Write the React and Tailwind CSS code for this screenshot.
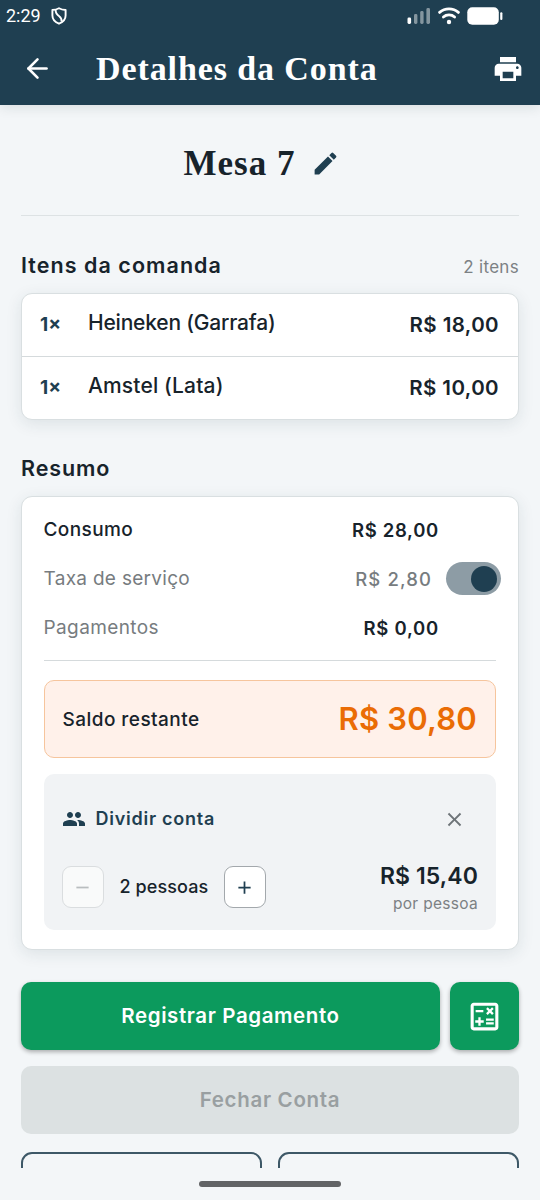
import * as React from 'react'
import { ArrowLeft } from 'lucide-react'
import {
  MdAdd,
  MdClose,
  MdEdit,
  MdOutlineCalculate,
  MdPeople,
  MdPrint,
  MdRemove,
} from 'react-icons/md'

const items = [
  { qty: 1, name: 'Heineken (Garrafa)', price: 'R$ 18,00', tracking: 'tracking-[-0.2px]' },
  { qty: 1, name: 'Amstel (Lata)', price: 'R$ 10,00', tracking: 'tracking-[0.15px]' },
]

function StatusBar() {
  return (
    <div className="flex h-8 items-center pl-[6px] pr-[37px] text-white">
      <span className="font-[Roboto] text-[18px] leading-8">2:29</span>
      <svg className="ml-[10px]" width="16" height="18" viewBox="0 0 16 18" fill="none" stroke="currentColor" strokeWidth="1.9">
        <path d="M8 1.2C5.6 2.6 3.6 2.9 1.4 3v5.6c0 3.6 2.6 6.6 6.6 8.1 4-1.5 6.6-4.5 6.6-8.1V3C12.4 2.9 10.4 2.6 8 1.2z" strokeLinejoin="round" />
        <path d="M4.6 3c0 3.2 1.2 4.6 3.6 6.2 2 1.4 2.6 2.8 2.4 5.4" />
      </svg>
      <svg className="ml-auto" width="24" height="18" viewBox="0 0 24 18" fill="currentColor">
        <rect x="0.5" y="10.5" width="3.6" height="6.5" rx="1.4" />
        <g opacity="0.45">
          <rect x="7" y="7" width="3.4" height="10" rx="1.4" />
          <rect x="13.2" y="4" width="3.4" height="13" rx="1.4" />
          <rect x="19.4" y="1" width="3.6" height="16" rx="1.4" />
        </g>
      </svg>
      <svg className="ml-[7px]" width="22" height="18" viewBox="0 0 22 18" fill="none" stroke="currentColor" strokeWidth="2.8" strokeLinecap="round">
        <path d="M1.6 5.4c5.2-4.6 13.6-4.6 18.8 0" />
        <path d="M5.4 10c3.1-2.8 8.1-2.8 11.2 0" />
        <circle cx="11" cy="15" r="2.2" fill="currentColor" stroke="none" />
      </svg>
      <svg className="ml-[7px]" width="36" height="18" viewBox="0 0 36 18" fill="currentColor">
        <rect x="0.3" y="0.3" width="31.5" height="17.4" rx="5" />
        <rect x="33.2" y="5.2" width="2.2" height="7.8" rx="1" />
      </svg>
    </div>
  )
}

function Header() {
  return (
    <header className="relative h-[105px] shrink-0 bg-[#1f3f51] text-white shadow-[0_2px_12px_rgba(20,40,40,0.12)]">
      <StatusBar />
      <div className="flex h-[73px] items-center pl-[22px] pr-4">
        <ArrowLeft size={31} strokeWidth={2} />
        <h1 className="ml-[43px] font-['Liberation_Serif',serif] text-[34px] font-bold leading-[73px] tracking-[0.9px]">
          Detalhes da Conta
        </h1>
        <MdPrint size={32} className="ml-auto" />
      </div>
    </header>
  )
}

function ItemRow({ item }) {
  return (
    <div className="flex h-[62.5px] items-center pl-[18px] pr-[19px]">
      <span className="w-12 text-[19px] font-bold leading-6 text-[#1f3f51]">{item.qty}×</span>
      <span className={`mb-[3px] text-[21px] font-medium leading-7 ${item.tracking}`}>{item.name}</span>
      <span className="ml-auto text-[20.5px] font-semibold leading-6 tracking-[0.4px]">
        {item.price}
      </span>
    </div>
  )
}

function Switch() {
  return (
    <span className="ml-[14px] flex h-[33px] w-[55px] items-center justify-end rounded-full bg-[#8d9ca5] pr-1">
      <span className="h-[26px] w-[26px] rounded-full bg-[#1f3f51]" />
    </span>
  )
}

function SplitBill() {
  return (
    <div className="mt-4 h-[156px] rounded-[10px] bg-[#f1f3f5] px-[18px] pt-[29px]">
      <div className="flex h-8 items-center text-[#1f3f51]">
        <MdPeople size={24} />
        <span className="ml-[10px] text-[18px] font-semibold leading-8 tracking-[0.75px]">Dividir conta</span>
        <MdClose size={23} className="ml-auto mr-3 text-[#6e7478]" />
      </div>
      <div className="mt-[27px] flex items-start">
        <span className="mt-1 flex h-[42px] w-[42px] items-center justify-center rounded-[9px] border border-[#dadddf] bg-[#f9fafa] text-[#b9bdbf]">
          <MdRemove size={21} />
        </span>
        <span className="ml-4 mt-1 w-[104px] text-[18px] font-medium leading-[42px] tracking-[0.1px]">2 pessoas</span>
        <span className="mt-1 flex h-[42px] w-[42px] items-center justify-center rounded-[9px] border border-[#a3a8ac] bg-white text-[#1f3f51]">
          <MdAdd size={21} />
        </span>
        <div className="ml-auto text-right">
          <div className="pt-px text-[23px] font-semibold leading-[26px] tracking-[0.1px]">R$ 15,40</div>
          <div className="mt-[3px] text-[15.5px] leading-6 tracking-[0.3px] text-[#7c8184]">por pessoa</div>
        </div>
      </div>
    </div>
  )
}

function Summary() {
  return (
    <div className="h-[454px] rounded-[11px] border border-[#d9dfe1] bg-white pr-[22px] pl-[21.5px] pt-2 shadow-[0_4px_16px_rgba(30,60,70,0.1)]">
      <div className="flex h-[49px] items-center justify-between pr-[57px]">
        <span className="text-[19px] font-medium leading-6 tracking-[0.4px]">Consumo</span>
        <span className="text-[18.5px] font-semibold leading-6 tracking-[0.7px]">R$ 28,00</span>
      </div>
      <div className="-mr-[5px] flex h-[49px] items-center text-[#777c80]">
        <span className="text-[19px] leading-6 tracking-[0.3px]">Taxa de serviço</span>
        <span className="ml-auto text-[18.5px] font-medium leading-6 tracking-[1.1px]">R$ 2,80</span>
        <Switch />
      </div>
      <div className="flex h-[49px] items-center justify-between pr-[57px]">
        <span className="text-[19px] leading-6 tracking-[0.4px] text-[#777c80]">Pagamentos</span>
        <span className="text-[18.5px] font-semibold leading-6 tracking-[0.75px]">R$ 0,00</span>
      </div>
      <div className="mt-2 border-t border-[#d5dadc]" />
      <div className="mt-[19px] flex h-[78px] items-center justify-between rounded-[10px] border border-[#f6c59d] bg-[#fff1ea] pl-[18px] pr-[18px]">
        <span className="pt-px text-[19px] font-medium leading-6 tracking-[0.45px]">Saldo restante</span>
        <span className="text-[31px] font-semibold leading-10 tracking-[0.2px] text-[#ea6c05]">R$ 30,80</span>
      </div>
      <SplitBill />
    </div>
  )
}

export default function App() {
  return (
    <div className="flex h-[1200px] w-[540px] flex-col overflow-hidden bg-[#f3f6f8] font-[Inter,sans-serif] text-[#17232b]">
      <Header />
      <main className="flex h-[1063px] flex-col overflow-hidden px-[21px]">
        <div className="flex h-[111px] shrink-0 items-center justify-center border-b border-[#dde2e4] pt-[7px] pr-4">
          <h2 className="font-['Liberation_Serif',serif] text-[35px] font-bold leading-10 tracking-[1px]">Mesa 7</h2>
          <MdEdit size={29} className="ml-4 text-[#1f3f51]" />
        </div>

        <div className="mt-[31px] flex h-9 shrink-0 items-center justify-between">
          <h3 className="text-[21.5px] font-semibold leading-9 tracking-[1.05px]">Itens da comanda</h3>
          <span className="mt-1 text-[17px] leading-9 tracking-[0.3px] text-[#7c8184]">2 itens</span>
        </div>
        <div className="mt-[10px] shrink-0 divide-y divide-[#d5dadc] rounded-[11px] border border-[#d9dfe1] bg-white shadow-[0_4px_16px_rgba(30,60,70,0.1)]">
          {items.map((item) => (
            <ItemRow key={item.name} item={item} />
          ))}
        </div>

        <h3 className="mt-[30px] mb-[10px] shrink-0 text-[21.5px] font-semibold leading-9 tracking-[0.9px]">Resumo</h3>
        <div className="shrink-0">
          <Summary />
        </div>

        <div className="mt-8 flex shrink-0 gap-[10px] text-white">
          <button className="h-[68px] flex-1 rounded-[10px] bg-[#0c9a5d] text-[20.5px] font-semibold tracking-[0.6px] shadow-[0_2px_4px_rgba(0,0,0,0.3)]">
            Registrar Pagamento
          </button>
          <button className="flex h-[68px] w-[69px] items-center justify-center rounded-[10px] bg-[#0c9a5d] shadow-[0_2px_4px_rgba(0,0,0,0.3)]">
            <MdOutlineCalculate size={37} />
          </button>
        </div>
        <button className="mt-4 h-[68px] shrink-0 rounded-[10px] bg-[#dce1e2] text-[20.5px] font-semibold tracking-[0.7px] text-[#999fa1]">
          Fechar Conta
        </button>
        <div className="mt-[18px] grid shrink-0 grid-cols-2 gap-4">
          <div className="h-[68px] rounded-[11px] border-2 border-[#3d5867]" />
          <div className="h-[68px] rounded-[11px] border-2 border-[#3d5867]" />
        </div>
      </main>
      <div className="flex h-8 shrink-0 justify-center pt-[13px]">
        <span className="h-[6px] w-[142px] rounded-full bg-[#626466]" />
      </div>
    </div>
  )
}
